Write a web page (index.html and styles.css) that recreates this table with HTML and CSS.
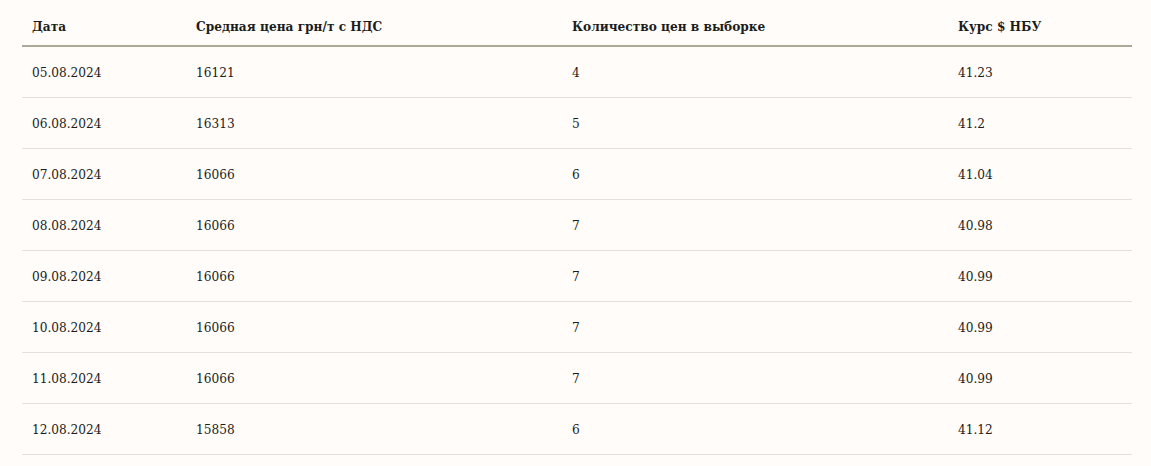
FILE: index.html
```html
<!DOCTYPE html>
<html lang="ru">
<head>
<meta charset="utf-8">
<link rel="stylesheet" href="styles.css">
</head>
<body>
<div class="wrap">
<table class="prices">
<colgroup>
<col class="c1"><col class="c2"><col class="c3"><col class="c4">
</colgroup>
<thead>
<tr><th>Дата</th><th>Средная цена грн/т с НДС</th><th>Количество цен в выборке</th><th>Курс $ НБУ</th></tr>
</thead>
<tbody>
<tr><td>05.08.2024</td><td>16121</td><td>4</td><td>41.23</td></tr>
<tr><td>06.08.2024</td><td>16313</td><td>5</td><td>41.2</td></tr>
<tr><td>07.08.2024</td><td>16066</td><td>6</td><td>41.04</td></tr>
<tr><td>08.08.2024</td><td>16066</td><td>7</td><td>40.98</td></tr>
<tr><td>09.08.2024</td><td>16066</td><td>7</td><td>40.99</td></tr>
<tr><td>10.08.2024</td><td>16066</td><td>7</td><td>40.99</td></tr>
<tr><td>11.08.2024</td><td>16066</td><td>7</td><td>40.99</td></tr>
<tr><td>12.08.2024</td><td>15858</td><td>6</td><td>41.12</td></tr>
</tbody>
</table>
</div>
</body>
</html>
```
FILE: styles.css
```css
html, body {
  margin: 0;
  padding: 0;
  background: #fffcf9;
}
.wrap {
  padding: 0 19px 0 22px;
}
.prices {
  width: 1110px;
  border-collapse: collapse;
  table-layout: fixed;
  font-family: "DejaVu Serif Condensed", "DejaVu Serif", serif;
  font-size: 13.5px;
  color: #1c1c1c;
}
.c1 { width: 164px; }
.c2 { width: 376px; }
.c3 { width: 386px; }
.c4 { width: 184px; }
.prices th {
  text-align: left;
  font-weight: bold;
  padding: 6px 10px 0;
  height: 46px;
  border-bottom: 2px solid #a9aa98;
  vertical-align: middle;
  box-sizing: border-box;
}
.prices td {
  padding: 0 10px;
  height: 50px;
  border-bottom: 1px solid #e3e1de;
  vertical-align: middle;
}
```
